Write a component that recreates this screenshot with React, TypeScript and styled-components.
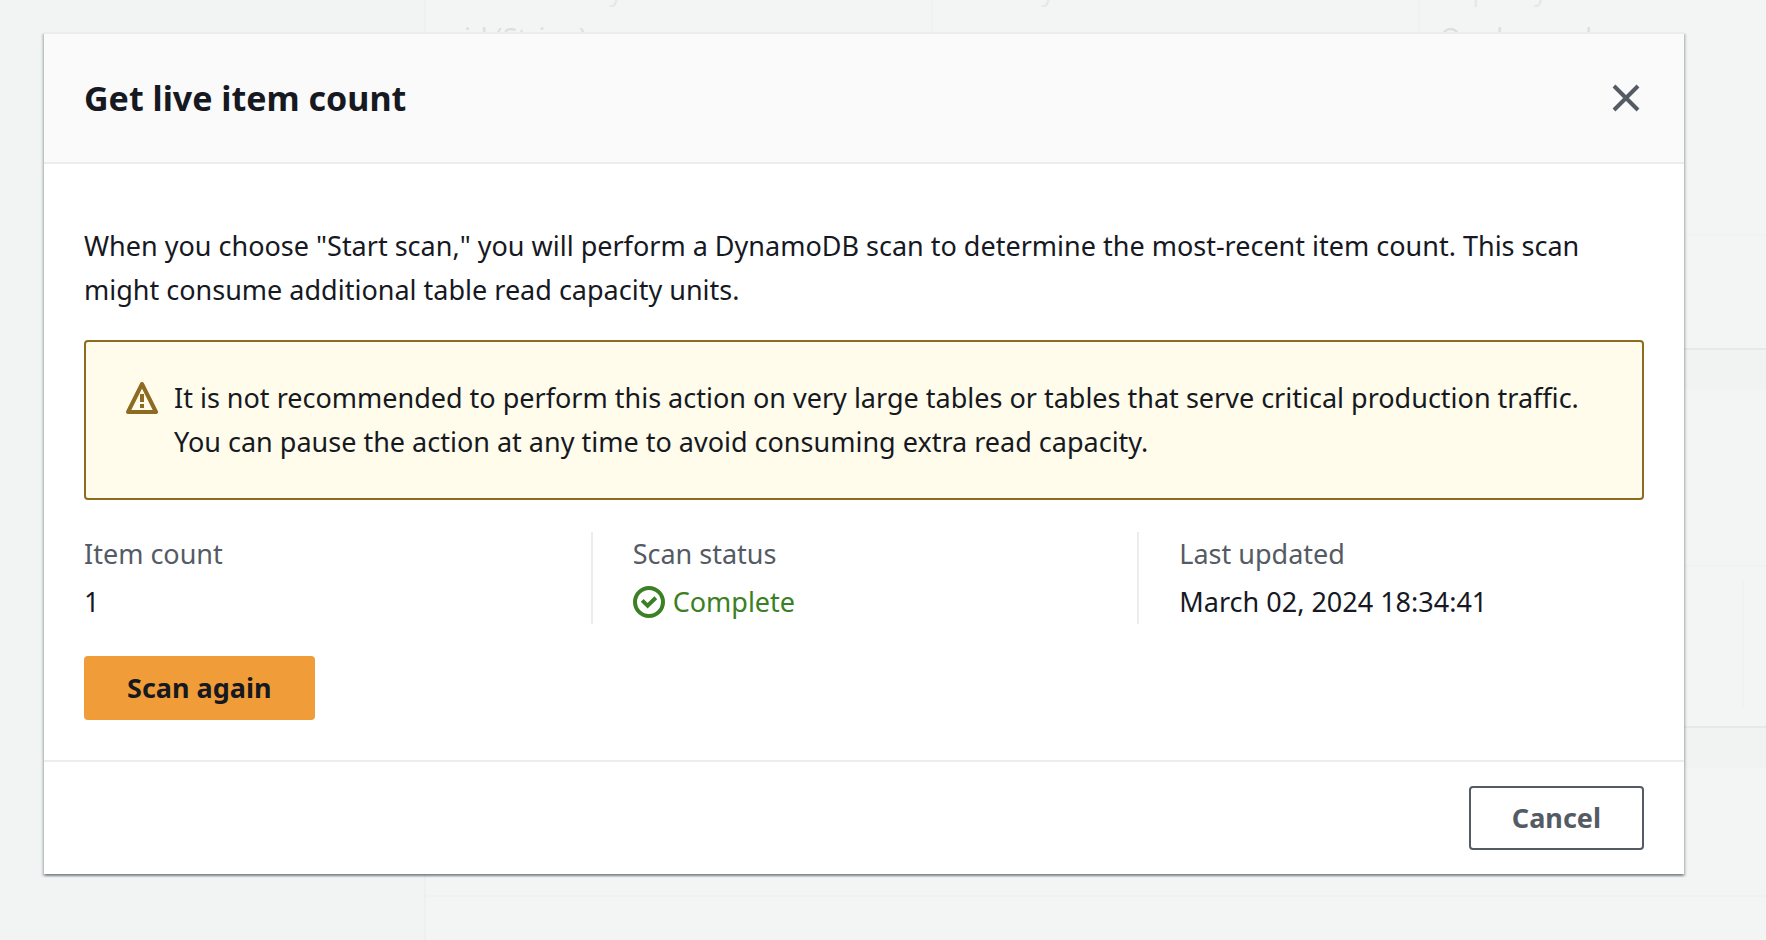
import React from 'react';
import styled, { createGlobalStyle } from 'styled-components';

const GlobalStyle = createGlobalStyle`
  *, *::before, *::after { box-sizing: border-box; }
  body {
    margin: 0;
    background: #f2f4f4;
    color: #16191f;
    font-family: "Noto Sans", "Open Sans", sans-serif;
    font-size: 27px;
    line-height: 44px;
  }
  button { font: inherit; }
`;

const Screen = styled.div`
  position: relative;
  min-height: 100vh;
  overflow: hidden;
`;

/* Dimmed console page under the dialog */
const Page = styled.div`
  position: absolute;
  inset: 0;
  display: grid;
  grid-template-columns: 426px 1fr;
  overflow: hidden;
  color: #dddfdf;
`;

const Sidebar = styled.div`
  border-right: 2px solid #eef0f0;
`;

const PageMain = styled.div`
  display: flex;
  flex-direction: column;
  gap: 40px;
  overflow: hidden;
  background: #f1f3f3;
`;

const Panel = styled.section<{ $height: number }>`
  flex: none;
  height: ${(p) => p.$height}px;
  background: #f3f5f4;
  border-bottom: 2px solid #e7e9e9;
`;

const PanelHeader = styled.div<{ $height: number }>`
  height: ${(p) => p.$height}px;
  border-bottom: 2px solid #f0f2f1;
`;

const Facts = styled.dl`
  display: grid;
  grid-template-columns: repeat(3, 487px);
  height: 236px;
  margin: 0;
  padding-left: 18px;
  border-bottom: 2px solid #f1f3f2;
`;

const Fact = styled.div`
  margin-top: -32px;
  padding-left: 20px;
  & + & { border-left: 2px solid #f0f2f1; }
  dt { color: #e6e8e8; }
  dd { margin: 4px 0 0; }
`;

const SideRule = styled.div`
  width: 2px;
  height: 128px;
  margin: 12px 22px 0 auto;
  background: #f0f2f1;
`;

/* Dialog */
const Overlay = styled.div`
  position: relative;
  padding: 32px 82px 66px 44px;
`;

const Dialog = styled.div`
  background: #ffffff;
  box-shadow:
    0 2px 2px 0 rgba(0, 28, 36, 0.3),
    2px 2px 2px 0 rgba(0, 28, 36, 0.15),
    -2px 2px 2px 0 rgba(0, 28, 36, 0.15);
`;

const DialogHeader = styled.header`
  display: flex;
  align-items: center;
  justify-content: space-between;
  padding: 42px 40px;
  background: #fafafa;
  border: solid #eaeded;
  border-width: 2px 0;
`;

const Title = styled.h2`
  margin: 0;
  font-size: 34px;
  line-height: 44px;
  font-weight: 700;
`;

const CloseButton = styled.button`
  display: flex;
  padding: 2px;
  border: 0;
  background: none;
  color: #545b64;
  cursor: pointer;
`;

const DialogBody = styled.div`
  display: flex;
  flex-direction: column;
  align-items: stretch;
  gap: 32px;
  padding: 60px 40px 40px;
`;

const Intro = styled.div`
  display: flex;
  flex-direction: column;
  gap: 28px;
`;

const Text = styled.p`
  margin: 0;
`;

const Alert = styled.div`
  display: flex;
  gap: 16px;
  padding: 34px 40px;
  border: 2px solid #8d6b22;
  border-radius: 4px;
  background: #fffceb;
`;

const Icon = styled.svg`
  flex: none;
  width: 32px;
  height: 32px;
  fill: none;
  stroke: currentColor;
  stroke-width: 2;
`;

const AlertIcon = styled(Icon)`
  margin-top: 6px;
  color: #8d6b22;
`;

const Columns = styled.dl`
  display: grid;
  grid-template-columns: repeat(3, 1fr);
  gap: 80px;
  margin: 0;
`;

const Column = styled.div`
  & + & {
    margin-left: -40px;
    padding-left: 40px;
    border-left: 2px solid #eaeded;
  }
  dt { color: #545b64; }
  dd { margin: 4px 0 0; }
`;

const Status = styled.span`
  display: flex;
  align-items: center;
  gap: 8px;
  color: #3c8024;
`;

const Button = styled.button<{ $primary?: boolean }>`
  align-self: flex-start;
  height: 64px;
  padding: 0 41px;
  border: 2px solid ${(p) => (p.$primary ? '#f09d39' : '#545b64')};
  border-radius: 4px;
  background: ${(p) => (p.$primary ? '#f09d39' : '#ffffff')};
  color: ${(p) => (p.$primary ? '#16191f' : '#545b64')};
  font-weight: 700;
  line-height: 44px;
  cursor: pointer;
`;

const DialogFooter = styled.footer`
  display: flex;
  justify-content: flex-end;
  padding: 24px 40px;
  border-top: 2px solid #eaeded;
`;

export default function App() {
  return (
    <Screen>
      <GlobalStyle />
      <Page aria-hidden="true">
        <Sidebar />
        <PageMain>
          <Panel $height={350}>
            <Facts>
              <Fact>
                <dt>Partition key</dt>
                <dd>id (String)</dd>
              </Fact>
              <Fact>
                <dt>Sort key</dt>
                <dd>-</dd>
              </Fact>
              <Fact>
                <dt>Capacity mode</dt>
                <dd>On-demand</dd>
              </Fact>
            </Facts>
          </Panel>
          <Panel $height={338}>
            <PanelHeader $height={177} />
            <SideRule />
          </Panel>
          <Panel $height={300}>
            <PanelHeader $height={129} />
          </Panel>
        </PageMain>
      </Page>

      <Overlay>
        <Dialog role="dialog" aria-modal="true" aria-labelledby="dialog-title">
          <DialogHeader>
            <Title id="dialog-title">Get live item count</Title>
            <CloseButton type="button" aria-label="Close">
              <Icon viewBox="0 0 16 16">
                <path d="M2 2l12 12M14 2L2 14" />
              </Icon>
            </CloseButton>
          </DialogHeader>

          <DialogBody>
            <Intro>
              <Text>
                When you choose "Start scan," you will perform a DynamoDB scan to determine the
                most-recent item count. This scan might consume additional table read capacity units.
              </Text>
              <Alert role="note">
                <AlertIcon viewBox="0 0 16 16" strokeLinejoin="round">
                  <path d="M8 1l7 14H1L8 1z" />
                  <path d="M8 6v4M8 11v2" />
                </AlertIcon>
                <Text>
                  It is not recommended to perform this action on very large tables or tables that
                  serve critical production traffic. You can pause the action at any time to avoid
                  consuming extra read capacity.
                </Text>
              </Alert>
            </Intro>

            <Columns>
              <Column>
                <dt>Item count</dt>
                <dd>1</dd>
              </Column>
              <Column>
                <dt>Scan status</dt>
                <dd>
                  <Status>
                    <Icon viewBox="0 0 16 16">
                      <circle cx="8" cy="8" r="7" />
                      <path d="M4.6 7.2L7.3 9.9L11.4 5.9" />
                    </Icon>
                    Complete
                  </Status>
                </dd>
              </Column>
              <Column>
                <dt>Last updated</dt>
                <dd>March 02, 2024 18:34:41</dd>
              </Column>
            </Columns>

            <Button type="button" $primary>Scan again</Button>
          </DialogBody>

          <DialogFooter>
            <Button type="button">Cancel</Button>
          </DialogFooter>
        </Dialog>
      </Overlay>
    </Screen>
  );
}
